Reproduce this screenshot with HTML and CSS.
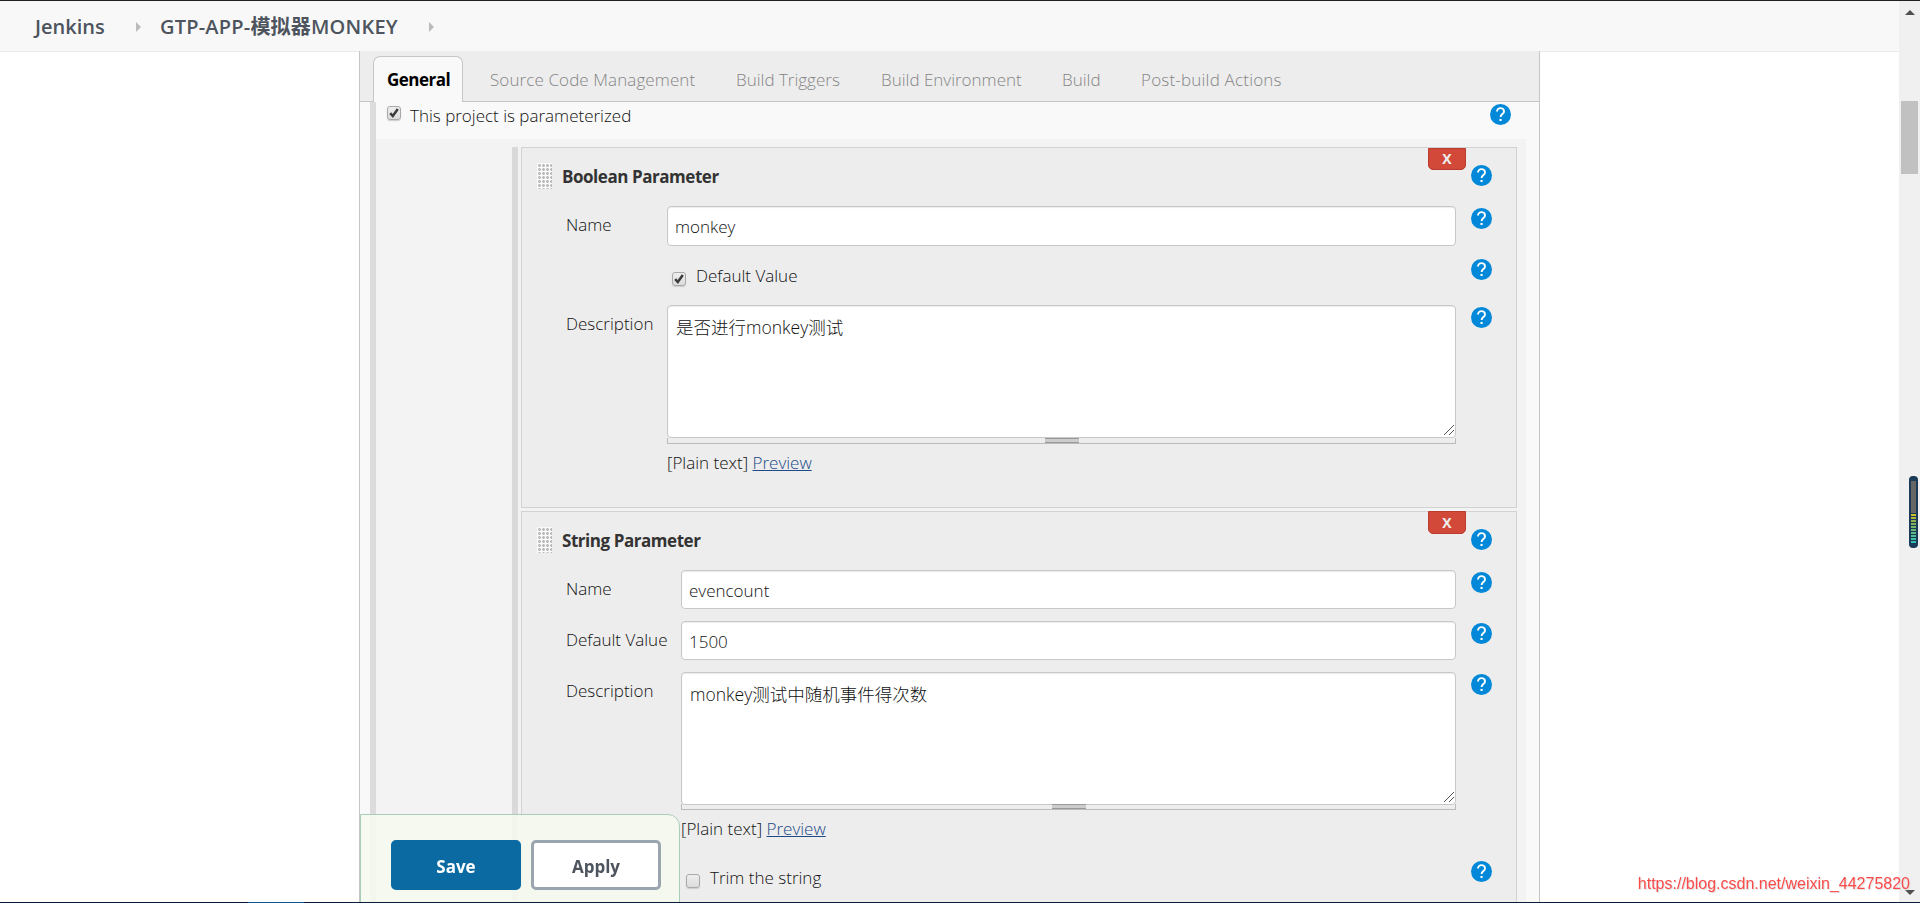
FILE: index.html
```html
<!DOCTYPE html>
<html lang="en">
<head>
  <meta charset="UTF-8">
  <title>GTP-APP-模拟器MONKEY Config [Jenkins]</title>
  <link rel="stylesheet" href="styles.css">
</head>
<body>
  <svg class="defs" width="0" height="0">
    <symbol id="help" viewBox="0 0 21 21">
      <circle cx="10.5" cy="10.5" r="10.5" fill="#0288d8"/>
      <path d="M7 7.6C7 5.5 8.5 4.1 10.5 4.1s3.5 1.3 3.5 3.3c0 2.6-3.4 2.8-3.4 5.6" fill="none" stroke="#fff" stroke-width="1.9"/>
      <rect x="9.5" y="14.9" width="2.1" height="2.1" fill="#fff"/>
    </symbol>
    <symbol id="check" viewBox="0 0 14 14">
      <path d="M3.2 7.2l2.6 2.8 5-7" fill="none" stroke="#3c3c3c" stroke-width="2.5"/>
    </symbol>
    <symbol id="resizer" viewBox="0 0 10 10">
      <path d="M0 10L10 0M5 10l5-5" fill="none" stroke="#555" stroke-width="1"/>
    </symbol>
  </svg>

  <div class="page">
    <header class="breadcrumbs">
      <a class="crumb crumb-home">Jenkins</a>
      <i class="arrow"></i>
      <a class="crumb crumb-job">GTP-APP-模拟器MONKEY</a>
      <i class="arrow"></i>
    </header>

    <main class="config">
      <nav class="tabs">
        <a class="tab active">General</a>
        <a class="tab t-scm">Source Code Management</a>
        <a class="tab t-triggers">Build Triggers</a>
        <a class="tab t-env">Build Environment</a>
        <a class="tab t-build">Build</a>
        <a class="tab t-post">Post-build Actions</a>
      </nav>

      <div class="section">
        <div class="section-head">
          <span class="checkbox"><svg><use href="#check"/></svg></span>
          <label>This project is parameterized</label>
          <svg class="help"><use href="#help"/></svg>
        </div>

        <div class="section-body">
          <div class="params">
            <div class="param param-boolean">
              <button class="delete">X</button>
              <div class="param-title">
                <i class="handle"></i>
                <b>Boolean Parameter</b>
                <svg class="help"><use href="#help"/></svg>
              </div>
              <div class="row">
                <label class="name">Name</label>
                <input class="text" type="text" value="monkey">
                <svg class="help"><use href="#help"/></svg>
              </div>
              <div class="row row-check">
                <label class="name"></label>
                <div class="check-line"><span class="checkbox"><svg><use href="#check"/></svg></span><label>Default Value</label></div>
                <svg class="help"><use href="#help"/></svg>
              </div>
              <div class="row">
                <label class="name">Description</label>
                <div class="area">
                  <textarea>是否进行monkey测试</textarea>
                  <svg class="resizer"><use href="#resizer"/></svg>
                  <div class="grip"><i></i></div>
                  <div class="preview">[Plain text] <a>Preview</a></div>
                </div>
                <svg class="help"><use href="#help"/></svg>
              </div>
            </div>

            <div class="param param-string">
              <button class="delete">X</button>
              <div class="param-title">
                <i class="handle"></i>
                <b>String Parameter</b>
                <svg class="help"><use href="#help"/></svg>
              </div>
              <div class="row">
                <label class="name">Name</label>
                <input class="text" type="text" value="evencount">
                <svg class="help"><use href="#help"/></svg>
              </div>
              <div class="row">
                <label class="name">Default Value</label>
                <input class="text" type="text" value="1500">
                <svg class="help"><use href="#help"/></svg>
              </div>
              <div class="row row-area">
                <label class="name">Description</label>
                <div class="area">
                  <textarea>monkey测试中随机事件得次数</textarea>
                  <svg class="resizer"><use href="#resizer"/></svg>
                  <div class="grip"><i></i></div>
                  <div class="preview">[Plain text] <a>Preview</a></div>
                </div>
                <svg class="help"><use href="#help"/></svg>
              </div>
              <div class="row">
                <label class="name"></label>
                <div class="check-line"><span class="checkbox"></span><label>Trim the string</label></div>
                <svg class="help"><use href="#help"/></svg>
              </div>
            </div>
          </div>
        </div>
      </div>
    </main>
  </div>

  <aside class="scrollbar">
    <i class="up"></i>
    <i class="thumb"></i>
    <i class="down"></i>
  </aside>

  <div class="bottom-bar">
    <button class="btn save">Save</button>
    <button class="btn apply">Apply</button>
  </div>
  <div class="meter"><i></i></div>
  <div class="watermark">https://blog.csdn.net/weixin_44275820</div>
  <div class="taskbar-edge"></div>
</body>
</html>
```

FILE: styles.css
```css
* {
  box-sizing: border-box;
}
body {
  margin: 0;
  height: 903px;
  display: flex;
  overflow: hidden;
  border-top: 1px solid #231f20;
  background: #fff;
  color: #111;
  font-family: "Open Sans", "Noto Sans CJK SC", sans-serif;
  font-size: 17px;
  font-weight: 300;
  line-height: 24px;
}
.defs {
  position: absolute;
}
.page {
  flex: 1;
  height: 902px;
  overflow: hidden;
}

/* breadcrumbs */
.breadcrumbs {
  height: 51px;
  padding: 1px 35px 0;
  display: flex;
  align-items: center;
  background: #f8f8f8;
  border-bottom: 1px solid #ececec;
  color: #4d545d;
  font-size: 20px;
  font-weight: 600;
}
.crumb {
  white-space: nowrap;
}
.crumb-home {
  width: 101px;
}
.crumb-job {
  width: 269px;
  margin-left: 19px;
  letter-spacing: 0.2px;
}
.arrow {
  border-left: 5px solid #bbb;
  border-top: 5px solid transparent;
  border-bottom: 5px solid transparent;
}

/* tabs */
.config {
  width: 1181px;
  height: 852px;
  margin-left: 359px;
  margin-top: -1px;
  border: solid #c6c6c6;
  border-width: 0 1px;
  background: #f9f9f9;
}
.tabs {
  height: 51px;
  padding: 5px 0 0 13px;
  display: flex;
  background: #ededed;
  border-bottom: 1px solid #c6c6c6;
  color: #858585;
}
.tab {
  height: 46px;
  padding: 12px 0 0;
  margin-right: 39px;
  white-space: nowrap;
}
.tab.active {
  width: 90px;
  margin-right: 27px;
  padding: 11px 13px 0;
  background: #f9f9f9;
  border: 1px solid #c6c6c6;
  border-bottom: 0;
  border-radius: 7px 7px 0 0;
  color: #000;
  font-weight: 700;
  letter-spacing: -0.5px;
}
.t-scm {
  width: 207px;
  letter-spacing: 0.1px;
}
.t-triggers {
  width: 106px;
}
.t-env {
  width: 142px;
}
.t-build {
  width: 40px;
}
.t-post {
  letter-spacing: 0.2px;
}

/* section */
.section {
  height: 801px;
  margin: 0 13px 0 10px;
  border-left: 6px solid #dcdcdc;
}
.section-head {
  height: 37px;
  display: flex;
  padding: 1px 15px 0 11px;
}
.section-head .checkbox {
  margin-top: 3px;
}
.section-head label {
  margin: 1px 0 0 9px;
}
.section-head .help {
  margin-left: auto;
  margin-top: 1px;
}
.section-body {
  height: 764px;
  padding: 8px 9px 0 136px;
  background: #f3f3f3;
}
.params {
  height: 756px;
  padding-left: 3px;
  border-left: 6px solid #d9d9d9;
}
.help {
  width: 21px;
  height: 21px;
  flex: none;
}
.checkbox {
  width: 14px;
  height: 14px;
  flex: none;
  border: 1px solid #a9a9a9;
  border-radius: 3px;
  background: linear-gradient(#eee, #dcdcdc);
  box-shadow: 0 1px 1px #ccc;
}
.checkbox svg {
  display: block;
  width: 14px;
  height: 14px;
  margin: -1px;
}

/* parameter blocks */
.param {
  position: relative;
  background: #ededed;
  border: 1px solid #d2d2d2;
}
.param-boolean {
  height: 361px;
  margin-bottom: 3px;
}
.param-string {
  height: 420px;
}
.delete {
  position: absolute;
  top: 0;
  right: 50px;
  width: 38px;
  height: 22px;
  padding: 0;
  border: 1px solid #b93c2e;
  border-radius: 0 0 5px 5px;
  background: #d24939;
  color: #eee;
  font: 700 14px/20px "Open Sans", sans-serif;
}
.param-string .delete {
  top: -1px;
  height: 23px;
}
.param-title {
  height: 58px;
  display: flex;
  padding: 15px 24px 0 15px;
}
.param-title b {
  margin: 2px 0 0 10px;
  color: #333;
  font-weight: 700;
  letter-spacing: -0.45px;
}
.param-title .help {
  margin-left: auto;
  margin-top: 2px;
}
.handle {
  width: 15px;
  height: 26px;
  background: radial-gradient(circle at 2.5px 2.5px, #bbb 1px, #fafafa 1.8px) 0 0 / 4px 4px;
}
.row {
  min-height: 51px;
  display: grid;
  grid-template-columns: 86px 789px 21px;
  column-gap: 15px;
  padding-left: 44px;
  align-items: start;
}
.param-string .row {
  grid-template-columns: 100px 775px 21px;
}
.row .name {
  padding-top: 7px;
  margin-right: -15px;
  white-space: nowrap;
}
.row .help {
  margin-top: 2px;
}
.row-check {
  min-height: 48px;
}
.text,
textarea {
  display: block;
  width: 100%;
  margin: 0;
  border: 1px solid #c8c8c8;
  border-radius: 4px;
  box-shadow: inset 0 1px 1px rgba(0,0,0,0.08);
  background: #fff;
  color: #111;
  font: inherit;
  outline: none;
}
.text {
  height: 40px;
  padding: 1px 7px 0;
}
.param-string .text {
  height: 39px;
}
.area {
  position: relative;
}
textarea {
  height: 133px;
  padding: 9px 8px;
  font-size: 17.5px;
  resize: none;
}
.resizer {
  position: absolute;
  right: 2px;
  top: 120px;
  width: 10px;
  height: 10px;
}
.grip {
  height: 6px;
  border: solid #bbb;
  border-width: 0 1px 1px;
}
.param-string .grip {
  margin-top: -1px;
}
.grip i {
  display: block;
  width: 34px;
  height: 5px;
  margin: 0 auto;
  border: solid #999;
  border-width: 1px 0;
  background: #ccc;
}
.preview {
  padding-top: 7px;
}
.preview a {
  color: #204a87;
  text-decoration: underline;
}
.check-line {
  display: flex;
  padding: 7px 0 0 5px;
}
.check-line .checkbox {
  margin: 8px 10px 0 0;
}
.row-area {
  min-height: 187px;
}

/* sticky save bar */
.bottom-bar {
  position: fixed;
  left: 360px;
  top: 814px;
  width: 320px;
  height: 100px;
  padding: 25px 0 0 30px;
  display: flex;
  gap: 10px;
  background: rgba(245,249,239,0.88);
  border: 1px solid #a9cdb9;
  border-radius: 0 12px 0 0;
}
.btn {
  width: 130px;
  height: 50px;
  padding: 3px 0 0;
  border: 3px solid #0b6aa2;
  border-radius: 5px;
  background: #0b6aa2;
  color: #fff;
  font: 700 17px "Open Sans", sans-serif;
}
.apply {
  border-color: #9aa5af;
  background: #fff;
  color: #4d545d;
}

/* scrollbar and overlays */
.scrollbar {
  width: 21px;
  height: 902px;
  display: flex;
  flex-direction: column;
  align-items: center;
  background: #f0f0f0;
}
.up,
.down {
  border: 5px solid transparent;
  border-top-width: 0;
  border-bottom-color: #505050;
  margin-top: 9px;
}
.thumb {
  width: 17px;
  height: 73px;
  margin-top: 86px;
  background: #c1c1c1;
}
.down {
  margin: auto 0 8px;
  border-width: 5px 5px 0;
  border-color: #505050 transparent transparent;
}
.meter {
  position: fixed;
  left: 1909px;
  top: 476px;
  width: 9px;
  height: 72px;
  padding: 5px 2px;
  border-radius: 4px;
  background: #1b3a57;
}
.meter i {
  display: block;
  height: 62px;
  background: linear-gradient(#666 0 32px, transparent 32px),
    repeating-linear-gradient(transparent 0 2px, #1b3a57 2px 3px),
    linear-gradient(#666 50%, #e0c020 52%, #8fb050 65%, #30c0b0);
}
.watermark {
  position: fixed;
  right: 10px;
  top: 874px;
  color: #fb4b4b;
  font: 16px/20px "Liberation Sans", sans-serif;
  text-shadow: 1px 1px 1px #ddd;
}
.taskbar-edge {
  position: fixed;
  left: 0;
  right: 0;
  top: 902px;
  height: 1px;
  background: linear-gradient(90deg, #06203a 248px, #0b5394 248px 304px, #06203a 304px);
}
```
